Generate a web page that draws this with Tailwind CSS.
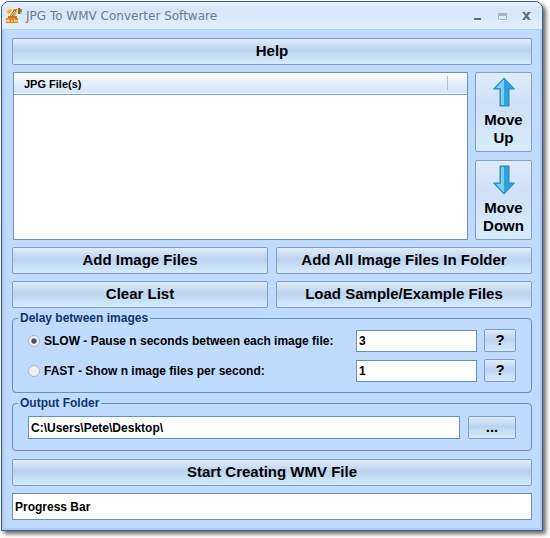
<!DOCTYPE html>
<html lang="en">
<head>
  <meta charset="UTF-8" />
  <meta name="viewport" content="width=device-width, initial-scale=1.0" />
  <script src="https://cdn.jsdelivr.net/npm/@tailwindcss/browser@4"></script>
  <title>JPG To WMV Converter Software</title>
</head>
<body class="bg-white pt-px pl-px pr-[7px] pb-[6px] font-['Liberation_Sans',Arial,sans-serif] font-bold text-black">
  <div class="overflow-hidden rounded-t-lg border border-[#3f5f86] bg-[#bfdbff] shadow-[3px_3px_4px_rgba(0,0,0,0.6)]">

    <!-- Title bar -->
    <header class="flex h-7 items-center border-b border-[#b0cff5] bg-linear-to-b from-[#e6f0fd] from-0% via-[#d6e6fa] via-30% to-[#e2eefd] pl-1 pr-2">
      <svg class="h-4 w-4" viewBox="0 0 16 16">
        <path d="M1 0h11v11H1z" fill="#fbe6b8" />
        <path d="M1 3 4 1 6 2 4 5 2 6z" fill="#f3a62b" />
        <path d="M8 1h3v3l-2 4-3 1z" fill="#f3a62b" />
        <path d="M3 9 8 2 11 1 9 4 6 9z" fill="#5f5c48" />
        <path d="M5 8 9 3" stroke="#fff3d6" />
        <path d="M2 8h9v2H2z" fill="#b8783a" />
        <path d="M12 0h2v3h-2z" fill="#d8402c" />
        <path d="M14 1h2v3h-2z" fill="#4fa83d" />
        <path d="M12 3h2v3h-2z" fill="#3a66c4" />
        <path d="M14 4h2v2h-2z" fill="#e3b93c" />
        <path d="M0 10h12v5H0z" fill="#e8871a" />
        <path d="M1 14v-2h2v2M5 13h2M8 12h1v2M10 13h2" stroke="#fff3d6" fill="none" />
      </svg>
      <h1 class="ml-1 grow font-['DejaVu_Sans',Verdana,sans-serif] text-[12px] font-normal text-[#6d7b8f]">JPG To WMV Converter Software</h1>
      <div class="flex gap-2">
        <button aria-label="Minimize" class="h-4 w-4">
          <svg class="h-4 w-4" viewBox="0 0 16 16"><path d="M4 10h7v2H4z" fill="#5e6b80" /><path d="M4 12h7v1H4z" fill="#fff" /></svg>
        </button>
        <button aria-label="Maximize" class="h-4 w-4" disabled>
          <svg class="h-4 w-4" viewBox="0 0 16 16"><path d="M4.500 5.500h8v6h-8z" fill="#e4edf9" stroke="#a9b3c1" /><path d="M4 5h9v3H4z" fill="#a9b3c1" /><path d="M4 12h9v1H4z" fill="#fff" /></svg>
        </button>
        <button aria-label="Close" class="h-4 w-4">
          <svg class="h-4 w-4" viewBox="0 0 16 16"><path d="M4 5l8 8M12 5l-8 8" stroke="#fff" stroke-width="2" /><path d="M4 4h3l1 2 2-2h3L10 8l3 4h-3L8 10l-1 2H4l3-4z" fill="#66728a" /></svg>
        </button>
      </div>
    </header>

    <main class="border-x-2 border-b-2 border-[#a9c9f3] px-2 pt-2 pb-2">
      <button class="block h-[27px] w-full rounded-[2px] border border-[#7c9fce] bg-linear-to-b from-[#e2ecf9] from-0% via-[#bcd3f0] via-45% to-[#d6ecfc] pb-[2px] text-[15px] leading-none">Help</button>

      <!-- File list and ordering buttons -->
      <div class="mt-[7px] flex gap-[7px]">
        <div class="ml-px grow border border-[#6690c5] bg-white">
          <table class="w-full text-left text-[11px]">
            <thead>
              <tr class="h-[21px] border-b border-[#7ba0d4] bg-linear-to-b from-white to-[#cfe3fd]">
                <th class="pt-[2px] pl-[10px]">JPG File(s)</th>
                <th class="w-5"><span class="block h-[14px] border-l border-[#a3c0e6]"></span></th>
              </tr>
            </thead>
          </table>
        </div>
        <div class="flex w-[57px] shrink-0 flex-col gap-2">
          <button class="flex h-20 flex-col items-center rounded-[2px] border border-[#7c9fce] bg-linear-to-b from-[#e2ecf9] from-0% via-[#d0e0f5] via-37% to-[#d6ecfc] pt-1 text-[15px] leading-[18px]">
            <svg class="mb-1 h-[30px] w-6" viewBox="0 0 24 30">
              <path d="M12 1 22.500 12H17v17H8V12H1.500z" fill="#2ba5dc" stroke="#3580ac" />
              <path d="M12 2v26H9V11H4z" fill="#7ccff0" />
            </svg>
            Move<br />Up
          </button>
          <button class="flex h-20 flex-col items-center rounded-[2px] border border-[#7c9fce] bg-linear-to-b from-[#e2ecf9] from-0% via-[#d0e0f5] via-37% to-[#d6ecfc] pt-1 text-[15px] leading-[18px]">
            <svg class="mb-1 h-[30px] w-6" viewBox="0 0 24 30">
              <path d="M12 29 22.500 18H17V1H8v17H1.500z" fill="#2ba5dc" stroke="#3580ac" />
              <path d="M12 28V2H9v17H4z" fill="#7ccff0" />
            </svg>
            Move<br />Down
          </button>
        </div>
      </div>

      <div class="mt-[7px] grid grid-cols-2 gap-x-2 gap-y-[7px] text-[15px] leading-none">
        <button class="h-[27px] rounded-[2px] border border-[#7c9fce] bg-linear-to-b from-[#e2ecf9] from-0% via-[#bcd3f0] via-45% to-[#d6ecfc] pb-[2px]">Add Image Files</button>
        <button class="h-[27px] rounded-[2px] border border-[#7c9fce] bg-linear-to-b from-[#e2ecf9] from-0% via-[#bcd3f0] via-45% to-[#d6ecfc] pb-[2px]">Add All Image Files In Folder</button>
        <button class="h-[27px] rounded-[2px] border border-[#7c9fce] bg-linear-to-b from-[#e2ecf9] from-0% via-[#bcd3f0] via-45% to-[#d6ecfc] pb-[2px]">Clear List</button>
        <button class="h-[27px] rounded-[2px] border border-[#7c9fce] bg-linear-to-b from-[#e2ecf9] from-0% via-[#bcd3f0] via-45% to-[#d6ecfc] pb-[2px]">Load Sample/Example Files</button>
      </div>

      <fieldset class="mt-[3px] rounded border border-[#6690c5] pt-1 pr-[15px] pb-[10px] pl-[15px] text-[12px]">
        <legend class="-ml-[10px] px-[2px] text-[12px] leading-[14px] text-[#12346e]">Delay between images</legend>
        <div class="flex items-center">
          <input type="radio" id="slow" name="delay" checked class="h-3 w-3 appearance-none rounded-full border border-[#a9b4c4] bg-[#eef0f3] checked:bg-radial checked:from-[#44576e] checked:from-30% checked:to-[#eef0f3] checked:to-45%" />
          <label for="slow" class="ml-1 grow">SLOW - Pause n seconds between each image file:</label>
          <input type="text" value="3" aria-label="Seconds between each image file" class="h-[22px] w-[121px] border border-[#6690c5] bg-white px-[2px]" />
          <button class="ml-[7px] h-[23px] w-8 rounded-[2px] border border-[#7c9fce] bg-linear-to-b from-[#e2ecf9] from-0% via-[#bcd3f0] via-45% to-[#d6ecfc] pb-[2px] text-[15px] leading-none">?</button>
        </div>
        <div class="mt-[7px] flex items-center">
          <input type="radio" id="fast" name="delay" class="h-3 w-3 appearance-none rounded-full border border-[#a9b4c4] bg-[#eef0f3]" />
          <label for="fast" class="ml-1 grow">FAST - Show n image files per second:</label>
          <input type="text" value="1" aria-label="Image files per second" class="h-[22px] w-[121px] border border-[#6690c5] bg-white px-[2px]" />
          <button class="ml-[7px] h-[23px] w-8 rounded-[2px] border border-[#7c9fce] bg-linear-to-b from-[#e2ecf9] from-0% via-[#bcd3f0] via-45% to-[#d6ecfc] pb-[2px] text-[15px] leading-none">?</button>
        </div>
      </fieldset>

      <fieldset class="mt-[3px] rounded border border-[#6690c5] pt-[6px] pr-[15px] pb-[11px] pl-[15px] text-[12px]">
        <legend class="-ml-[10px] px-[2px] text-[12px] leading-[14px] text-[#12346e]">Output Folder</legend>
        <div class="flex gap-2">
          <input type="text" value="C:\Users\Pete\Desktop\" aria-label="Output Folder" class="h-[23px] min-w-0 grow border border-[#6690c5] bg-white px-[2px]" />
          <button class="h-[23px] w-12 rounded-[2px] border border-[#7c9fce] bg-linear-to-b from-[#e2ecf9] from-0% via-[#bcd3f0] via-45% to-[#d6ecfc] pb-[2px] text-[15px] leading-none">...</button>
        </div>
      </fieldset>

      <button class="mt-2 block h-[27px] w-full rounded-[2px] border border-[#7c9fce] bg-linear-to-b from-[#e2ecf9] from-0% via-[#bcd3f0] via-45% to-[#d6ecfc] pb-[2px] text-[15px] leading-none">Start Creating WMV File</button>
      <div class="mt-[7px] flex h-[27px] items-center border border-[#6690c5] bg-white px-[2px] text-[12px]">Progress Bar</div>
    </main>
  </div>
</body>
</html>
